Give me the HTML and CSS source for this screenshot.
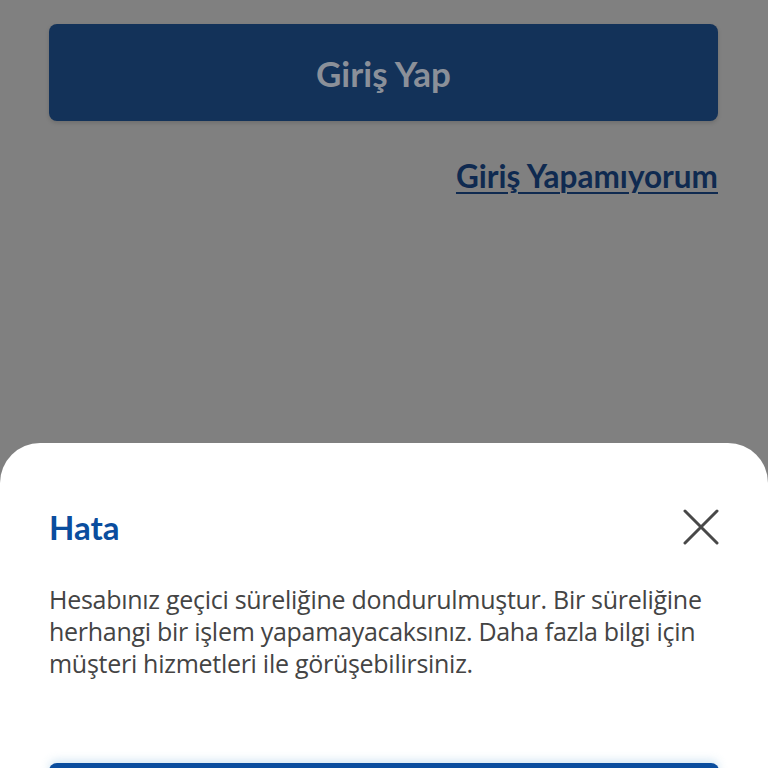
FILE: index.html
```html
<!DOCTYPE html>
<html lang="tr">
<head>
<meta charset="utf-8">
<link rel="stylesheet" href="styles.css">
</head>
<body>
<div class="page">
  <button class="login-btn">Giriş Yap</button>
  <div class="link-row"><a class="help-link" href="#">Giriş Yapamıyorum</a></div>
</div>
<div class="sheet">
  <div class="sheet-head">
    <h2 class="sheet-title">Hata</h2>
    <svg class="close" width="36" height="36" viewBox="0 0 36 36"><path d="M2 2 L34 34 M34 2 L2 34" stroke="#484848" stroke-width="3" stroke-linecap="round" fill="none"/></svg>
  </div>
  <p class="sheet-text">Hesabınız geçici süreliğine dondurulmuştur. Bir süreliğine herhangi bir işlem yapamayacaksınız. Daha fazla bilgi için müşteri hizmetleri ile görüşebilirsiniz.</p>
  <div class="sheet-btn"></div>
</div>
</body>
</html>
```
FILE: styles.css
```css
html, body { margin: 0; padding: 0; }
body {
  width: 768px; height: 768px; overflow: hidden;
  background: #808080;
  font-family: Lato, "Open Sans", sans-serif;
  position: relative;
}
.page { padding: 24px 50px 0 49px; }
.login-btn {
  display: block; width: 100%; height: 97px;
  border: none; border-radius: 8px;
  background: #133259;
  color: #8b9099;
  font-family: Lato, sans-serif; font-weight: 700; font-size: 35px;
  box-shadow: 0 2px 4px rgba(0,0,0,0.15);
}
.link-row { display: flex; justify-content: flex-end; margin-top: 36px; }
.help-link {
  color: #0f2a50; font-weight: 700; font-size: 31.5px;
  text-decoration: underline; text-underline-offset: 4px; text-decoration-thickness: 2px;
}
.sheet {
  position: absolute; left: 0; right: 0; top: 443px; bottom: 0;
  background: #fff; border-radius: 40px 40px 0 0;
  padding: 64px 49px 0 49px; overflow: hidden;
}
.sheet-head { display: flex; justify-content: space-between; align-items: center; }
.sheet-title { margin: 0; color: #0a4d9e; font-size: 33px; font-weight: 700; }
.sheet-text {
  margin: 36px 0 0; color: #444; font-size: 25px; line-height: 32px;
  font-family: "Open Sans", sans-serif; font-weight: 400; letter-spacing: -0.28px;
}
.sheet-btn {
  margin-top: 84px; height: 60px; background: #0a4d9e; border-radius: 8px;
  box-shadow: 0 -3px 8px rgba(120,180,220,0.3);
}
```
